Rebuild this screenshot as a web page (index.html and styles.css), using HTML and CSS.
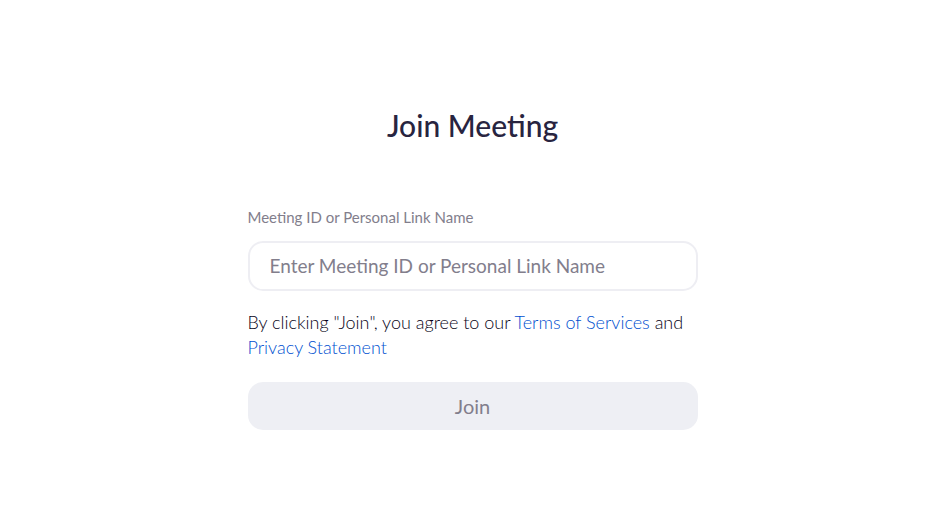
FILE: index.html
```html
<!DOCTYPE html>
<html lang="en">
<head>
<meta charset="utf-8">
<meta name="viewport" content="width=device-width, initial-scale=1">
<title>Join Meeting</title>
<link rel="stylesheet" href="styles.css">
</head>
<body>
<main class="page">
  <form class="join">
    <h1 class="join-title">Join Meeting</h1>
    <label class="join-label" for="meeting">Meeting ID or Personal Link Name</label>
    <input class="join-input" id="meeting" type="text" placeholder="Enter Meeting ID or Personal Link Name">
    <p class="join-terms">By clicking "Join", you agree to our <a href="#terms">Terms of Services</a> and <a href="#privacy">Privacy Statement</a></p>
    <button class="join-button" type="submit" disabled>Join</button>
  </form>
</main>
</body>
</html>
```
FILE: styles.css
```css
* {
  box-sizing: border-box;
}

body {
  margin: 0;
  background: #fff;
  color: #282440;
  font-family: Lato, "Liberation Sans", sans-serif;
}

.page {
  display: flex;
  justify-content: center;
  padding: 105px 24px 24px;
}

.join {
  display: flex;
  flex-direction: column;
  width: 100%;
  max-width: 450px;
}

.join-title {
  margin: 0 0 60px;
  font-size: 30px;
  font-weight: 500;
  line-height: 40px;
  text-align: center;
}

.join-label {
  margin-bottom: 12px;
  color: #827e8c;
  font-size: 15px;
  line-height: 24px;
}

.join-input {
  width: 100%;
  height: 50px;
  padding: 0 20px 2px;
  border: 2px solid #eeeef3;
  border-radius: 15px;
  background: #fff;
  color: #282440;
  font: inherit;
  font-size: 19px;
}

.join-input::placeholder {
  color: #827e8c;
  opacity: 1;
}

.join-terms {
  margin: 19px 0 22px;
  color: #080418;
  font-size: 18px;
  font-weight: 300;
  line-height: 25px;
}

.join-terms a {
  color: #0050d0;
  text-decoration: none;
}

.join-button {
  height: 48px;
  padding: 0;
  border: 0;
  border-radius: 15px;
  background: #eeeff4;
  color: #827e8c;
  font: inherit;
  font-size: 20px;
}
```
